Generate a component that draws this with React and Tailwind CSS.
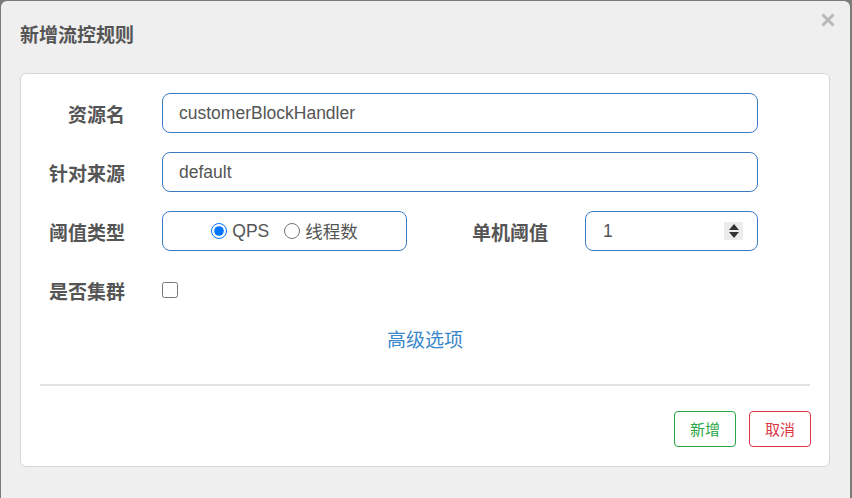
import React from "react";

const cjk = { fontFamily: '"Noto Sans CJK SC", "Noto Sans", sans-serif' };
const latin = { fontFamily: '"Liberation Sans", "Noto Sans CJK SC", sans-serif' };

function Label({ children, className = "" }) {
  return (
    <div
      className={`text-[19px] font-bold text-[#555] text-right leading-none ${className}`}
      style={cjk}
    >
      {children}
    </div>
  );
}

function TextBox({ value }) {
  return (
    <div
      className="w-[596px] h-[40px] rounded-[8px] border border-[#3b7cc0] bg-white flex items-center pl-[16px] text-[17.5px] text-[#555]"
      style={latin}
    >
      {value}
    </div>
  );
}

function Spinner() {
  return (
    <div className="w-[19px] h-[18px] bg-[#ececec] flex flex-col items-center justify-center gap-[2px]">
      <svg width="10" height="6" viewBox="0 0 10 6">
        <path d="M0 6 L5 0 L10 6 Z" fill="#333" />
      </svg>
      <svg width="10" height="6" viewBox="0 0 10 6">
        <path d="M0 0 L5 6 L10 0 Z" fill="#333" />
      </svg>
    </div>
  );
}

export default function App() {
  return (
    <div className="w-[852px] h-[498px] overflow-hidden bg-[#7b7b7b] pl-[1px] pt-[1px]">
      <div className="relative w-[849px] h-[520px] rounded-[6px] bg-[#efefef]">
        {/* header */}
        <div className="h-[64px] flex items-center px-[19px]">
          <h4 className="text-[19px] font-bold text-[#555] leading-none" style={cjk}>
            新增流控规则
          </h4>
        </div>
        <button className="absolute right-[15px] top-[12px] w-[14px] h-[14px]">
          <svg width="14" height="14" viewBox="0 0 14 14">
            <path d="M1.5 1.5 L12.5 12.5 M12.5 1.5 L1.5 12.5" stroke="#b8b8b8" strokeWidth="3" strokeLinecap="butt" />
          </svg>
        </button>

        {/* body card */}
        <div className="mt-[8px] ml-[19px] w-[810px] h-[394px] rounded-[6px] border border-[#d6d6d6] bg-white pt-[19px]">
          <div className="flex flex-col gap-[19px]">
            <div className="flex items-center h-[40px]">
              <Label className="w-[104px]">资源名</Label>
              <div className="ml-[37px]">
                <TextBox value="customerBlockHandler" />
              </div>
            </div>
            <div className="flex items-center h-[40px]">
              <Label className="w-[104px]">针对来源</Label>
              <div className="ml-[37px]">
                <TextBox value="default" />
              </div>
            </div>
            <div className="flex items-center h-[40px]">
              <Label className="w-[104px]">阈值类型</Label>
              <div className="ml-[37px] w-[245px] h-[40px] rounded-[8px] border border-[#3b7cc0] flex items-center justify-center text-[17.5px] text-[#555]">
                <label className="flex items-center" style={latin}>
                  <input type="radio" name="grade" defaultChecked className="w-[16px] h-[16px] m-0 accent-[#0075ff]" />
                  <span className="ml-[5px]">QPS</span>
                </label>
                <label className="flex items-center ml-[15px]">
                  <input type="radio" name="grade" className="w-[16px] h-[16px] m-0" />
                  <span className="ml-[5px]" style={cjk}>线程数</span>
                </label>
              </div>
              <Label className="w-[141px]">单机阈值</Label>
              <div
                className="ml-[37px] w-[173px] h-[40px] rounded-[8px] border border-[#3b7cc0] flex items-center justify-between pl-[17px] pr-[14px] text-[17.5px] text-[#555]"
                style={latin}
              >
                <span>1</span>
                <Spinner />
              </div>
            </div>
            <div className="flex items-center h-[40px]">
              <Label className="w-[104px]">是否集群</Label>
              <input type="checkbox" className="ml-[37px] w-[16px] h-[16px] m-0" />
            </div>
          </div>

          <div className="mt-[16px] h-[24px] flex items-center justify-center">
            <a className="text-[19px] text-[#3a87c9] leading-none" style={cjk}>
              高级选项
            </a>
          </div>

          <div className="mt-[34px] mx-[19px] h-[2px] bg-[#e3e3e3]" />

          <div className="mt-[25px] mr-[18px] flex justify-end gap-[13px]">
            <button
              className="w-[62px] h-[36px] rounded-[4px] border border-[#28a745] text-[#28a745] text-[15px] bg-white"
              style={cjk}
            >
              新增
            </button>
            <button
              className="w-[62px] h-[36px] rounded-[4px] border border-[#dc3545] text-[#dc3545] text-[15px] bg-white"
              style={cjk}
            >
              取消
            </button>
          </div>
        </div>
      </div>
    </div>
  );
}
